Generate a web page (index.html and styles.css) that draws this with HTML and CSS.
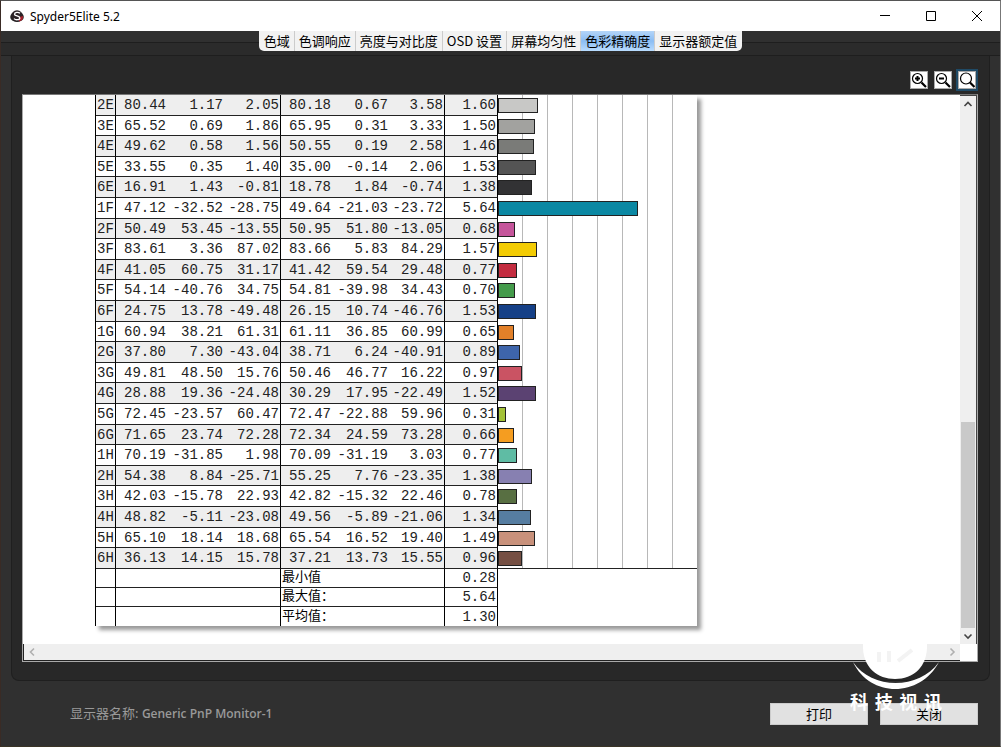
FILE: index.html
```html
<!DOCTYPE html>
<html lang="zh-CN">
<head>
<meta charset="utf-8">
<title>Spyder5Elite 5.2</title>
<link rel="stylesheet" href="styles.css">
</head>
<body>
<div class="window">
  <header class="titlebar">
    <svg class="app-icon" viewBox="0 0 14 14" aria-hidden="true">
      <ellipse cx="7" cy="8" rx="6.800" ry="5" fill="#222"/>
      <circle cx="7" cy="7" r="5.800" fill="#2a2225"/>
      <path d="M9 12.500C12 12 13.500 10 13 7L9 8Z" fill="#a3202c"/>
      <path d="M10 4.300C8.500 2.800 4.500 3 4.500 5.200C4.500 7.400 9.800 6.500 9.800 8.900C9.800 11.200 5.500 11.200 4 9.600" fill="none" stroke="#fff" stroke-width="1.300"/>
    </svg>
    <h1 class="title">Spyder5Elite 5.2</h1>
    <div class="window-controls">
      <button class="win-btn" aria-label="最小化"><svg viewBox="0 0 12 12"><path d="M1 5.500H11" /></svg></button>
      <button class="win-btn" aria-label="最大化"><svg viewBox="0 0 12 12"><path d="M1.500 1.500H10.500V10.500H1.500Z"/></svg></button>
      <button class="win-btn" aria-label="关闭窗口"><svg viewBox="0 0 12 12"><path d="M1 1L11 11M11 1L1 11"/></svg></button>
    </div>
  </header>

  <nav class="tabs-row">
    <div class="tabs" role="tablist">
      <button class="tab" role="tab">色域</button>
      <button class="tab" role="tab">色调响应</button>
      <button class="tab" role="tab">亮度与对比度</button>
      <button class="tab" role="tab">OSD 设置</button>
      <button class="tab" role="tab">屏幕均匀性</button>
      <button class="tab active" role="tab" aria-selected="true">色彩精确度</button>
      <button class="tab" role="tab">显示器额定值</button>
    </div>
  </nav>

  <main class="panel">
    <div class="toolbar">
      <button class="zoom-btn" aria-label="放大"><svg viewBox="0 0 16 16"><circle cx="6.500" cy="6.500" r="5"/><path d="M4 6.500H9M6.500 4V9" stroke-width="2"/><path d="M10.500 10.500L15 15" stroke-width="2.200"/></svg></button>
      <button class="zoom-btn" aria-label="缩小"><svg viewBox="0 0 16 16"><circle cx="6.500" cy="6.500" r="5"/><path d="M4 6.500H9" stroke-width="2"/><path d="M10.500 10.500L15 15" stroke-width="2.200"/></svg></button>
      <button class="zoom-btn focused" aria-label="适合窗口"><svg viewBox="0 0 16 16"><circle cx="7" cy="6.500" r="5.500"/><path d="M11 10.500L15.500 15" stroke-width="2.200"/></svg></button>
    </div>

    <div class="viewer">
      <div class="canvas">
        <table class="report">
          <colgroup>
            <col class="c-id"><col class="c-l"><col class="c-ab"><col class="c-b">
            <col class="c-l2"><col class="c-ab"><col class="c-b2"><col class="c-de"><col class="c-chart">
          </colgroup>
          <tbody id="patches"></tbody>
          <tfoot>
            <tr><th></th><td colspan="3"></td><td class="label" colspan="3">最小值</td><td>0.28</td><td class="blank" rowspan="3"></td></tr>
            <tr><th></th><td colspan="3"></td><td class="label" colspan="3">最大值：</td><td>5.64</td></tr>
            <tr><th></th><td colspan="3"></td><td class="label" colspan="3">平均值：</td><td>1.30</td></tr>
          </tfoot>
        </table>
      </div>
      <div class="vscroll">
        <svg class="arrow" viewBox="0 0 16 16"><path d="M4.500 10L8 6.500L11.500 10"/></svg>
        <div class="thumb"></div>
        <svg class="arrow" viewBox="0 0 16 16"><path d="M4.500 6.500L8 10L11.500 6.500"/></svg>
      </div>
      <div class="hscroll">
        <svg class="arrow" viewBox="0 0 16 16"><path d="M10 4.500L6.500 8L10 11.500"/></svg>
        <svg class="arrow" viewBox="0 0 16 16"><path d="M6.500 4.500L10 8L6.500 11.500"/></svg>
      </div>
    </div>
  </main>

  <footer class="footer">
    <p class="monitor">显示器名称: <b>Generic PnP Monitor-1</b></p>
    <div class="actions">
      <button class="action">打印</button>
      <button class="action">关闭</button>
    </div>
  </footer>

  <div class="watermark" aria-hidden="true">
    <svg class="mark" viewBox="0 0 88 46">
      <path d="M11 0C10 24 26 35 43 35C61 35 76 23 75 0Z" fill="#fff"/>
      <path d="M27 8V18M37 7V18M46 17L60 6" stroke="#f3f3f3" stroke-width="4" fill="none"/>
      <path d="M1 18C20 46 67 46 87 18C68 54 18 54 1 18Z" fill="#fff"/>
    </svg>
    <div class="mark-text"><span>科</span><span>技</span><span>视</span><span>讯</span></div>
  </div>
</div>
<script src="report.js"></script>
</body>
</html>
```
FILE: styles.css
```css
* { box-sizing: border-box; }

body {
  margin: 0;
  background: #303030;
  font-family: "Noto Sans", "Noto Sans CJK SC", sans-serif;
  font-size: 12px;
}

button {
  margin: 0;
  padding: 0;
  border: 0;
  background: none;
  color: #000;
  font: inherit;
}

.window {
  position: relative;
  display: flex;
  flex-direction: column;
  height: 100vh;
  border: 1px solid #777;
  border-top-color: #555;
  border-left-color: #3a2b25;
  border-bottom-color: #3a3426;
  background: #303030;
}

.titlebar {
  display: flex;
  align-items: center;
  flex: none;
  height: 30px;
  padding-left: 9px;
  background: #fff;
}
.app-icon { width: 14px; height: 14px; }
.title {
  flex: 1;
  margin: 0 0 0 6px;
  font-size: 12px;
  font-weight: 400;
}
.window-controls { display: flex; }
.win-btn {
  display: grid;
  place-items: center;
  width: 46px;
  height: 28px;
}
.win-btn svg {
  width: 12px;
  height: 12px;
  fill: none;
  stroke: #000;
}

.tabs-row {
  display: flex;
  justify-content: center;
  flex: none;
  height: 25px;
  border-bottom: 1px solid #1e1e1e;
  background: linear-gradient(#303030 11px, #1e1e1e 11px, #1e1e1e 12px, #2b2b2b 12px);
}
.tabs {
  display: flex;
  height: 20px;
  overflow: hidden;
  border-radius: 0 0 5px 5px;
  background: #f2f2f2;
}
.tab {
  padding: 0 4px;
  border-right: 1px solid #ccc;
  font-family: "Noto Sans CJK SC", sans-serif;
  font-size: 13px;
  line-height: 18px;
}
.tab:first-child { padding-left: 5px; }
.tab:last-child { padding-right: 5px; border-right: 0; }
.tab.active { background: linear-gradient(#b4d5f8, #8bbdf3 50%, #b9dcff); }

.panel {
  display: flex;
  flex-direction: column;
  flex: 1;
  min-height: 0;
  margin: 0 10px;
  padding: 12px 11px 18px 10px;
  border: 1px solid #1f1f1f;
  border-top: 0;
  border-radius: 0 0 8px 8px;
  background: #282828;
}

.toolbar {
  display: flex;
  justify-content: flex-end;
  gap: 6px;
  height: 26px;
  padding: 3px 2px 5px;
}
.zoom-btn {
  display: grid;
  place-items: center;
  width: 18px;
  height: 18px;
  border: 1px solid #aaa;
  background: #fff;
}
.zoom-btn svg {
  width: 16px;
  height: 16px;
  fill: none;
  stroke: #000;
  stroke-width: 1.2px;
}
.zoom-btn.focused { box-shadow: 0 0 0 2px #1f4a66; }

.viewer {
  display: grid;
  grid-template: minmax(0, 1fr) 17px / minmax(0, 1fr) 17px;
  flex: 1;
  min-height: 0;
  border: 1px solid #aaa;
  border-top-color: #777;
  background: #fff;
}
.canvas {
  overflow: hidden;
  padding-left: 72px;
}

.report {
  width: 602px;
  border-spacing: 0;
  border-left: 1px solid #000;
  table-layout: fixed;
  background: #fff;
  box-shadow: 4px 4px 4px #999;
  color: #222;
  font-family: "Liberation Mono", "Noto Sans CJK SC", monospace;
  font-size: 14px;
  line-height: 18px;
}
.report th,
.report td {
  padding: 0 1px;
  border-bottom: 1px solid #222;
  text-align: right;
  white-space: nowrap;
  font-weight: 400;
}
.report tr { height: 21px; }
.report tbody tr:nth-child(5n + 2),
.report tbody tr:nth-child(5n + 4) { height: 20px; }
.report tfoot tr { height: 19px; }
.report tbody tr:nth-child(odd) { background: #eee; }

.report th { border-right: 1px solid #000; text-align: center; }
.report td:nth-child(4),
.report td:nth-child(7),
.report td:nth-child(8),
.report tfoot td { border-right: 1px solid #000; }

.report .chart {
  padding: 0;
  border-bottom: 0;
  background: #fff repeating-linear-gradient(90deg, #fff 0 24px, #b8b8b8 24px 25px);
}
.report tbody tr:last-child .chart { border-bottom: 1px solid #222; }
.report tfoot .label {
  color: #000;
  font-size: 13px;
  text-align: left;
}
.report tfoot .blank { border: 0; }
.report tfoot tr:last-child > * { border-bottom: 0; }

.bar {
  height: 15px;
  border: 1px solid #222;
}

.c-id { width: 20px; }
.c-l { width: 51px; }
.c-ab { width: 57px; }
.c-b { width: 57px; }
.c-l2 { width: 51px; }
.c-b2 { width: 56px; }
.c-de { width: 53px; }

.vscroll {
  display: flex;
  flex-direction: column;
  border-top: 1px solid #444;
  border-right: 1px solid #444;
  background: #efefef;
}
.hscroll {
  display: flex;
  justify-content: space-between;
  border-left: 1px solid #222;
  border-bottom: 1px solid #222;
  background: #efefef;
}
.arrow {
  flex: none;
  width: 16px;
  height: 16px;
  fill: none;
  stroke: #444;
  stroke-width: 1.6px;
}
.hscroll .arrow { stroke: #b0b0b0; }
.thumb {
  height: 206px;
  margin: auto 1px 0;
  background: #c9c9c9;
}

.footer {
  display: flex;
  align-items: flex-start;
  justify-content: space-between;
  flex: none;
  height: 65px;
  padding: 22px 22px 0 69px;
}
.monitor {
  margin: 0;
  color: #999;
  font-size: 13px;
  line-height: 20px;
}
.monitor b {
  font-family: "Open Sans", sans-serif;
  font-size: 12px;
  font-weight: 600;
}
.actions { display: flex; gap: 12px; }
.action {
  width: 98px;
  height: 22px;
  border: 1px solid #ccc;
  background: #e1e1e1;
  font-family: "Noto Sans CJK SC", sans-serif;
  font-size: 13px;
  line-height: 20px;
}

.watermark {
  position: absolute;
  right: 58px;
  bottom: 34px;
  width: 92px;
  color: #fff;
  pointer-events: none;
}
.mark {
  display: block;
  width: 88px;
  height: 46px;
  margin: 0 auto;
}
.mark-text {
  display: flex;
  justify-content: space-between;
  font-family: "Noto Sans CJK SC", sans-serif;
  font-size: 18px;
  font-weight: 700;
  line-height: 22px;
}
```
FILE: report.js
```js
// id, measured L a b, reference L a b, delta E, swatch colour
const patches = `
2E 80.44 1.17 2.05 80.18 0.67 3.58 1.60 #c8c8c6
3E 65.52 0.69 1.86 65.95 0.31 3.33 1.50 #a2a29f
4E 49.62 0.58 1.56 50.55 0.19 2.58 1.46 #7a7b78
5E 33.55 0.35 1.40 35.00 -0.14 2.06 1.53 #545454
6E 16.91 1.43 -0.81 18.78 1.84 -0.74 1.38 #323234
1F 47.12 -32.52 -28.75 49.64 -21.03 -23.72 5.64 #0b88a3
2F 50.49 53.45 -13.55 50.95 51.80 -13.05 0.68 #c5559b
3F 83.61 3.36 87.02 83.66 5.83 84.29 1.57 #f3cc04
4F 41.05 60.75 31.17 41.42 59.54 29.48 0.77 #c32c40
5F 54.14 -40.76 34.75 54.81 -39.98 34.43 0.70 #449b4b
6F 24.75 13.78 -49.48 26.15 10.74 -46.76 1.53 #154087
1G 60.94 38.21 61.31 61.11 36.85 60.99 0.65 #e28029
2G 37.80 7.30 -43.04 38.71 6.24 -40.91 0.89 #3e65ab
3G 49.81 48.50 15.76 50.46 46.77 16.22 0.97 #ca5363
4G 28.88 19.36 -24.48 30.29 17.95 -22.49 1.52 #5b4272
5G 72.45 -23.57 60.47 72.47 -22.88 59.96 0.31 #a4c238
6G 71.65 23.74 72.28 72.34 24.59 73.28 0.66 #f59d20
1H 70.19 -31.85 1.98 70.09 -31.19 3.03 0.77 #5fbca4
2H 54.38 8.84 -25.71 55.25 7.76 -23.35 1.38 #8780b1
3H 42.03 -15.78 22.93 42.82 -15.32 22.46 0.78 #586f42
4H 48.82 -5.11 -23.08 49.56 -5.89 -21.06 1.34 #567da1
5H 65.10 18.14 18.68 65.54 16.52 19.40 1.49 #c8917b
6H 36.13 14.15 15.78 37.21 13.73 15.55 0.96 #754f43`.trim().split("\n");

const AXIS_MAX = 8;

document.getElementById("patches").innerHTML = patches.map(line => {
  const [id, ...rest] = line.split(" ");
  const colour = rest.pop();
  const deltaE = rest[rest.length - 1];
  const cells = rest.map(v => `<td>${v}</td>`).join("");
  const width = deltaE / AXIS_MAX * 100;
  return `<tr><th scope="row">${id}</th>${cells}<td class="chart"><div class="bar" style="width:${width}%;background:${colour}"></div></td></tr>`;
}).join("");
```
